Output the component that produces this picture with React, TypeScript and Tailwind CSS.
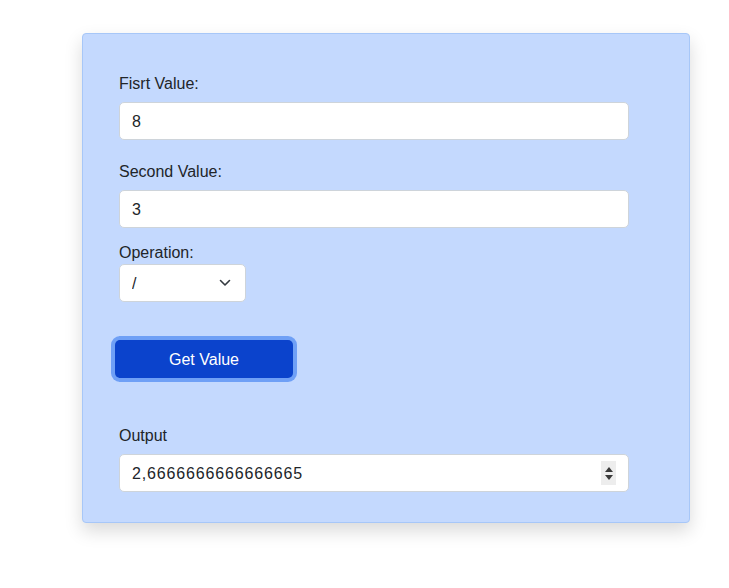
import { useState } from "react";

const inputCls =
    "block w-full h-[38px] rounded-[5px] border border-[#ced4da] bg-white px-3 pt-[2px] text-[16px] text-[#212529] outline-none";
const labelCls = "block h-6 pt-px text-[16px] leading-6";

const App = () => {
    const [first, setFirst] = useState("8");
    const [second, setSecond] = useState("3");
    const [op, setOp] = useState("/");

    return (
        <div className="min-h-[588px] w-[729px] bg-white pt-[33px] font-['Liberation_Sans',Arial,sans-serif] text-[#212529]">
            <div className="ml-[82px] w-[608px] rounded-[4px] border border-[#a7c7f8] bg-[#c4d9fe] pl-[36px] pr-[60px] pt-[37px] pb-[30px] shadow-[0_8px_18px_rgba(0,0,0,0.15)]">
                <label className={labelCls}>Fisrt Value:</label>
                <input className={`${inputCls} mt-[7px]`} value={first} onChange={(e) => setFirst(e.target.value)} />

                <label className={`${labelCls} mt-[19px]`}>Second Value:</label>
                <input className={`${inputCls} mt-[7px]`} value={second} onChange={(e) => setSecond(e.target.value)} />

                <label className={`${labelCls} mt-[12px]`}>Operation:</label>
                <div className="relative w-[127px]">
                    <select
                        className="block h-[38px] w-full appearance-none rounded-[5px] border border-[#ced4da] bg-white px-3 pt-[2px] text-[16px] text-[#212529] outline-none"
                        value={op}
                        onChange={(e) => setOp(e.target.value)}
                    >
                        <option>+</option>
                        <option>-</option>
                        <option>*</option>
                        <option>/</option>
                    </select>
                    <svg className="pointer-events-none absolute right-[15px] top-[15px]" width="12" height="8" viewBox="0 0 12 8" fill="none">
                        <path d="M1.5 1.5 6 6l4.5-4.5" stroke="#343a40" strokeWidth="1.6" strokeLinecap="round" strokeLinejoin="round" />
                    </svg>
                </div>

                <button className="mt-[38px] -ml-[4px] block h-[38px] w-[178px] rounded-[5px] bg-[#0b43cc] pt-[2px] text-[16px] text-white shadow-[0_0_0_4px_#6fa0f6]">
                    Get Value
                </button>

                <label className={`${labelCls} mt-[45px]`}>Output</label>
                <div className="relative mt-[7px]">
                    <input className={`${inputCls} tracking-[0.85px]`} readOnly value="2,6666666666666665" />
                    <div className="pointer-events-none absolute right-[13px] top-[7px] flex h-[24px] w-[15px] flex-col items-center justify-center gap-[3px] bg-[#ededed]">
                        <svg width="8" height="5" viewBox="0 0 8 5"><path d="M4 0 8 5H0z" fill="#3a3a3a" /></svg>
                        <svg width="8" height="5" viewBox="0 0 8 5"><path d="M0 0h8L4 5z" fill="#3a3a3a" /></svg>
                    </div>
                </div>
            </div>
        </div>
    );
};

export default App;
